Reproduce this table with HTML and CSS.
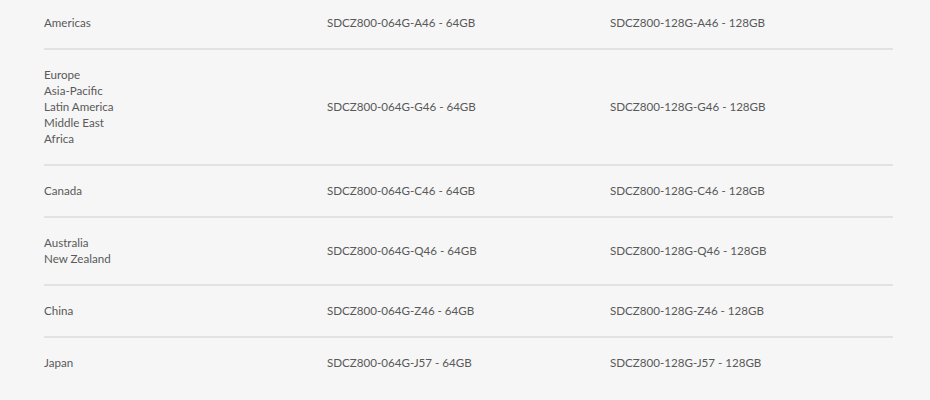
FILE: index.html
```html
<!DOCTYPE html>
<html>
<head>
<meta charset="utf-8">
<link rel="stylesheet" href="styles.css">
</head>
<body>
<div class="wrap">
<table class="parts">
<tbody>
<tr class="first"><td>Americas</td><td>SDCZ800-064G-A46 - 64GB</td><td>SDCZ800-128G-A46 - 128GB</td></tr>
<tr><td>Europe<br>Asia-Pacific<br>Latin America<br>Middle East<br>Africa</td><td>SDCZ800-064G-G46 - 64GB</td><td>SDCZ800-128G-G46 - 128GB</td></tr>
<tr><td>Canada</td><td>SDCZ800-064G-C46 - 64GB</td><td>SDCZ800-128G-C46 - 128GB</td></tr>
<tr><td>Australia<br>New Zealand</td><td>SDCZ800-064G-Q46 - 64GB</td><td>SDCZ800-128G-Q46 - 128GB</td></tr>
<tr><td>China</td><td>SDCZ800-064G-Z46 - 64GB</td><td>SDCZ800-128G-Z46 - 128GB</td></tr>
<tr class="last"><td>Japan</td><td>SDCZ800-064G-J57 - 64GB</td><td>SDCZ800-128G-J57 - 128GB</td></tr>
</tbody>
</table>
</div>
</body>
</html>
```
FILE: styles.css
```css
html, body {
  margin: 0;
  padding: 0;
  background: #f6f6f6;
}
.wrap {
  padding: 0 37px 0 44px;
}
.parts {
  width: 849px;
  border-collapse: collapse;
  font-family: Lato, "Open Sans", sans-serif;
  font-size: 11.6px;
  line-height: 16px;
  color: #595959;
}
.parts td {
  width: 283px;
  padding: 17px 0 17px 0;
  vertical-align: middle;
  border-bottom: 2px solid #e2e2e2;
  text-align: left;
}
.parts tr.first td {
  padding-top: 15px;
}
.parts tr.last td {
  border-bottom: none;
}
```
